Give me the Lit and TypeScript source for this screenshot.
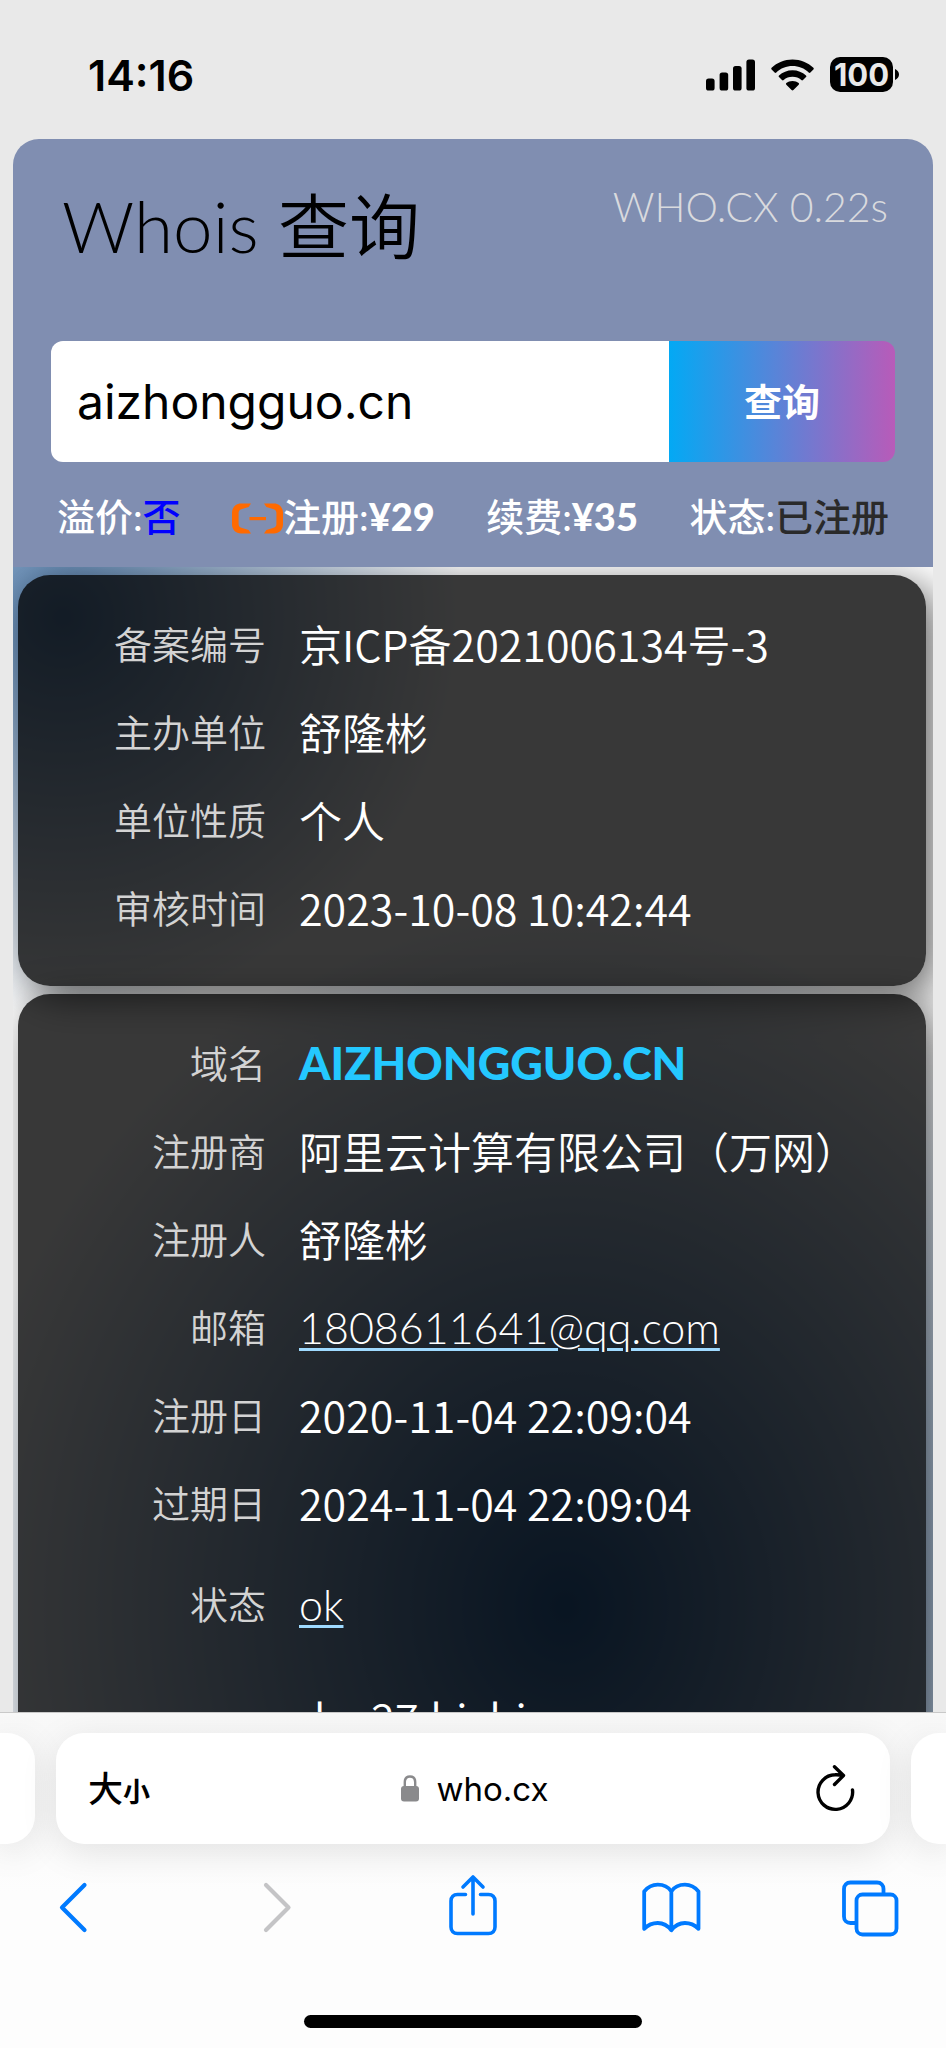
import { LitElement, html, css, svg, nothing } from "lit";
import { customElement, property } from "lit/decorators.js";

interface RecordRow {
  label: string;
  value: string;
  kind?: "domain" | "mail" | "status";
  tall?: boolean;
}

const FILING: RecordRow[] = [
  { label: "备案编号", value: "京ICP备2021006134号-3" },
  { label: "主办单位", value: "舒隆彬" },
  { label: "单位性质", value: "个人" },
  { label: "审核时间", value: "2023-10-08 10:42:44" },
];

const WHOIS: RecordRow[] = [
  { label: "域名", value: "AIZHONGGUO.CN", kind: "domain" },
  { label: "注册商", value: "阿里云计算有限公司（万网）" },
  { label: "注册人", value: "舒隆彬" },
  { label: "邮箱", value: "1808611641@qq.com", kind: "mail" },
  { label: "注册日", value: "2020-11-04 22:09:04" },
  { label: "过期日", value: "2024-11-04 22:09:04" },
  { label: "状态", value: "ok", kind: "status", tall: true },
  { label: "", value: "dns27.hichina.com", tall: true },
];

@customElement("status-bar")
export class StatusBar extends LitElement {
  static styles = css`
    :host {
      display: flex;
      align-items: center;
      justify-content: space-between;
      box-sizing: border-box;
      height: 139px;
      padding: 10px 47px 0 88px;
      font-family: Inter, "Liberation Sans", sans-serif;
      color: #000;
    }
    .time {
      font-size: 43px;
      line-height: 48px;
      font-weight: 600;
    }
    .icons {
      display: flex;
      align-items: center;
      gap: 16px;
    }
    svg {
      display: block;
    }
    .battery {
      display: flex;
      align-items: center;
      gap: 2px;
    }
    .level {
      width: 63px;
      height: 35px;
      border-radius: 10px;
      background: #000;
      color: #e9e9e9;
      font-size: 31px;
      line-height: 35px;
      font-weight: 700;
      text-align: center;
    }
  `;

  render() {
    return html`
      <span class="time">14:16</span>
      <div class="icons">
        <svg width="49" height="32" viewBox="0 0 49 32" aria-hidden="true">
          <rect x="0" y="19.5" width="8.6" height="12" rx="2.6" />
          <rect x="13.6" y="13.5" width="8.6" height="18" rx="2.6" />
          <rect x="27" y="7" width="8.6" height="24.5" rx="2.6" />
          <rect x="40.4" y="0.5" width="8.6" height="31" rx="2.6" />
        </svg>
        <svg width="43" height="32" viewBox="0 0 43 32" aria-hidden="true">
          <path d="M21.5 0.5C29.6 0.5 37 3.6 42.4 8.8C42.9 9.3 42.9 10 42.4 10.5L39.4 13.5C38.9 14 38.2 14 37.7 13.5C33.4 9.4 27.7 7.1 21.5 7.1C15.3 7.1 9.6 9.4 5.3 13.5C4.8 14 4.1 14 3.6 13.5L.6 10.5C.1 10 .1 9.3 .6 8.8C6 3.6 13.4.5 21.5.5Z" />
          <path d="M21.5 11.2C26.7 11.2 31.5 13.2 35 16.4C35.5 16.9 35.5 17.6 35 18.1L32 21C31.5 21.5 30.8 21.5 30.3 21C28 19 24.9 17.8 21.5 17.8C18.1 17.8 15 19 12.7 21C12.2 21.5 11.5 21.5 11 21L8 18.1C7.5 17.6 7.5 16.9 8 16.4C11.5 13.2 16.3 11.2 21.5 11.2Z" />
          <path d="M21.5 21.9C23.9 21.9 26.1 22.7 27.7 24.1C28.2 24.6 28.2 25.2 27.7 25.7L22.4 31.1C21.9 31.6 21.1 31.6 20.6 31.1L15.3 25.7C14.8 25.2 14.8 24.6 15.3 24.1C16.9 22.7 19.1 21.9 21.5 21.9Z" />
        </svg>
        <div class="battery">
          <span class="level">100</span>
          <svg width="4" height="11" viewBox="0 0 4 11" aria-hidden="true">
            <path d="M0 0C2.4 1 4 3 4 5.5S2.4 10 0 11Z" />
          </svg>
        </div>
      </div>
    `;
  }
}

@customElement("search-panel")
export class SearchPanel extends LitElement {
  static styles = css`
    :host {
      display: block;
      padding: 39px 38px 31px;
      border-radius: 26px 26px 0 0;
      background: #808eb1;
      font-family: Lato, "Noto Sans CJK SC", sans-serif;
    }
    .head {
      display: flex;
      justify-content: space-between;
      align-items: flex-start;
      padding: 0 7px 0 11px;
    }
    h1 {
      margin: 0;
      font-size: 71px;
      line-height: 96px;
      font-weight: 350;
      color: #000;
    }
    .timing {
      font-size: 41px;
      line-height: 58px;
      font-weight: 300;
      color: #d9dade;
    }
    .search {
      display: flex;
      height: 121px;
      margin-top: 67px;
      border-radius: 12px;
      overflow: hidden;
    }
    .domain {
      flex: 1;
      min-width: 0;
      box-sizing: border-box;
      border: 0;
      padding: 0 26px;
      background: #fff;
      color: #000;
      font: 400 48px Inter, "Liberation Sans", sans-serif;
      outline: none;
    }
    .go {
      width: 226px;
      border: 0;
      padding: 0 0 4px;
      background: linear-gradient(90deg, #03a9f4, #b85bb9);
      color: #fff;
      font: 700 38px "Noto Sans CJK SC", sans-serif;
    }
    .facts {
      display: flex;
      justify-content: space-between;
      margin: 34px 0 0;
      padding: 0 6px;
      font-size: 38px;
      line-height: 40px;
      font-weight: 900;
      color: #fff;
    }
    .fact {
      display: flex;
      align-items: center;
    }
    dt,
    dd {
      margin: 0;
    }
    dt {
      font-weight: 500;
    }
    .no {
      color: #00f;
      font-weight: 500;
    }
    .taken {
      color: #2a2a2a;
      font-weight: 500;
    }
    .brand {
      display: block;
      padding-top: 4px;
    }
  `;

  render() {
    return html`
      <div class="head">
        <h1>Whois 查询</h1>
        <span class="timing">WHO.CX 0.22s</span>
      </div>
      <form class="search" @submit=${(e: Event) => e.preventDefault()}>
        <input class="domain" type="text" aria-label="域名" .value=${"aizhongguo.cn"} />
        <button class="go" type="submit">查询</button>
      </form>
      <dl class="facts">
        <div class="fact"><dt>溢价:</dt><dd class="no">否</dd></div>
        <div class="fact">
          <svg class="brand" width="51" height="31" viewBox="0 0 51 31" aria-hidden="true">
            <path fill="#ff6a00" d="M19 .5H9C4 .5 0 4.500 0 9.500V21.500C0 26.500 4 30.500 9 30.500H19L16.600 27 9.300 24.800C7.700 24.300 6.600 22.900 6.600 21.200V9.800C6.600 8.100 7.700 6.700 9.300 6.200L16.600 4Z" />
            <path fill="#ff6a00" d="M32 .5H42C47 .5 51 4.500 51 9.500V21.500C51 26.500 47 30.500 42 30.500H32L34.400 27 41.700 24.800C43.300 24.300 44.400 22.900 44.400 21.200V9.800C44.400 8.100 43.300 6.700 41.700 6.200L34.400 4Z" />
            <rect fill="#ff6a00" x="17.500" y="14" width="16.500" height="3.200" />
          </svg>
          <dt>注册:</dt><dd>¥29</dd>
        </div>
        <div class="fact"><dt>续费:</dt><dd>¥35</dd></div>
        <div class="fact"><dt>状态:</dt><dd class="taken">已注册</dd></div>
      </dl>
    `;
  }
}

@customElement("record-card")
export class RecordCard extends LitElement {
  @property({ attribute: false }) rows: RecordRow[] = [];

  static styles = css`
    :host {
      display: block;
      padding: 27px 0 32px;
      border-radius: 32px;
      background: rgba(0, 0, 0, 0.78);
      box-shadow: 10px 10px 40px rgba(0, 0, 0, 0.6);
      font-family: "Noto Sans CJK SC", sans-serif;
      font-weight: 350;
    }
    table {
      width: 100%;
      table-layout: fixed;
      border-collapse: collapse;
    }
    tr {
      height: 88px;
    }
    .tall {
      height: 114px;
    }
    th {
      width: 248px;
      padding: 0 0 6px;
      text-align: right;
      font-size: 38px;
      line-height: 56px;
      font-weight: 350;
      color: #d3d3d3;
    }
    td {
      padding: 0 0 6px 33px;
      font-size: 43px;
      line-height: 56px;
      color: #fff;
      white-space: nowrap;
    }
    .domain {
      font-family: Lato, sans-serif;
      font-size: 45px;
      font-weight: 900;
      color: #24c8ff;
    }
    a {
      font-family: Lato, sans-serif;
      color: #fff;
      text-decoration: underline #9fdaff 3px;
      text-underline-offset: 4px;
    }
  `;

  private cell(row: RecordRow) {
    if (row.kind === "domain") return html`<span class="domain">${row.value}</span>`;
    if (row.kind === "mail") return html`<a href="mailto:${row.value}">${row.value}</a>`;
    if (row.kind === "status") return html`<a href="#status">${row.value}</a>`;
    return row.value;
  }

  render() {
    return html`
      <table>
        <tbody>
          ${this.rows.map(
            (row) => html`<tr class=${row.tall ? "tall" : nothing}>
              <th scope="row">${row.label}</th>
              <td>${this.cell(row)}</td>
            </tr>`
          )}
        </tbody>
      </table>
    `;
  }
}

const icons = {
  back: svg`<path d="M43.500 12L21 34.500L43.500 57" stroke-width="4.200" />`,
  forward: svg`<path d="M26 12L48.500 34.500L26 57" stroke="#c4c4c6" stroke-width="4.200" />`,
  share: svg`<path stroke-width="3.600" d="M25.500 21.500H17.500C13.500 21.500 11 24 11 28V54C11 58 13.500 60.500 17.500 60.500H48.500C52.500 60.500 55 58 55 54V28C55 24 52.500 21.500 48.500 21.500H40.500M33 41V5M23 14L33 4L43 14" />`,
  book: svg`<path stroke-width="3.900" d="M32 57.500C27.500 51.500 22 50 18 50C13 50 8.500 51.500 4 56V17.500C8 12.500 13 10.500 18 10.500C24 10.500 29 13 32 17.500C35 13 40 10.500 46 10.500C51 10.500 56 12.500 60 17.500V56C55.500 51.500 51 50 46 50C42 50 36.500 51.500 32 57.500ZM32 17.500V57" transform="translate(1.300 1.500) scale(.97)" />`,
  tabs: svg`<path stroke-width="3.800" d="M18 50H12.500C8.500 50 6 47.500 6 43.500V16C6 12 8.500 9.500 12.500 9.500H39C43 9.500 45.500 12 45.500 16V21" /><rect stroke-width="3.800" x="18.500" y="21.500" width="40" height="40" rx="6" />`,
};

@customElement("browser-bar")
export class BrowserBar extends LitElement {
  static styles = css`
    :host {
      display: block;
      position: relative;
      border-top: 1px solid #c9c9c9;
      background: linear-gradient(#f8f8f8, #fafafa 100px, #fdfdfd 180px);
      font-family: Inter, "Noto Sans CJK SC", sans-serif;
      overflow: hidden;
    }
    button {
      border: 0;
      padding: 0;
      background: none;
      font: inherit;
      color: inherit;
    }
    svg {
      display: block;
    }
    .tabs {
      display: flex;
      gap: 21px;
      padding-top: 20px;
    }
    .pill {
      height: 111px;
      box-sizing: border-box;
      border-radius: 28px;
      background: #fff;
      box-shadow: 0 8px 36px rgba(0, 0, 0, 0.1);
    }
    .previous {
      width: 35px;
      border-radius: 0 28px 28px 0;
    }
    .next {
      width: 35px;
      border-radius: 28px 0 0 28px;
    }
    .current {
      flex: 1;
      display: grid;
      grid-template-columns: 1fr auto 1fr;
      align-items: center;
      padding: 0 32px;
    }
    .size {
      justify-self: start;
      font-family: "Noto Sans CJK SC", sans-serif;
      font-weight: 500;
      line-height: 40px;
      font-size: 35px;
    }
    .small {
      font-size: 27px;
      font-weight: 700;
    }
    .site {
      display: flex;
      align-items: center;
      gap: 18px;
      padding-left: 3px;
      font-size: 33px;
      line-height: 44px;
    }
    .reload {
      justify-self: end;
    }
    .tools {
      display: flex;
      justify-content: space-between;
      padding: 29px 44px 0 41px;
      color: #007aff;
    }
    .home {
      width: 338px;
      height: 13px;
      margin: 78px auto 20px;
      border-radius: 7px;
      background: #000;
    }
  `;

  private tool(label: string, shape: unknown) {
    return html`<button aria-label=${label}>
      <svg width="64" height="64" viewBox="0 0 64 64" fill="none" stroke="currentColor" stroke-linecap="round" stroke-linejoin="round">${shape}</svg>
    </button>`;
  }

  render() {
    return html`
      <div class="tabs">
        <div class="pill previous"></div>
        <div class="pill current">
          <button class="size">大<span class="small">小</span></button>
          <div class="site">
            <svg width="18" height="27" viewBox="0 0 18 27" aria-hidden="true">
              <rect x="0" y="11" width="18" height="15.500" rx="3" fill="#8a8a8c" />
              <path d="M3.800 12V7C3.800 3.500 6 1.500 9 1.500S14.200 3.500 14.200 7V12" fill="none" stroke="#8a8a8c" stroke-width="2.400" />
            </svg>
            <span>who.cx</span>
          </div>
          <button class="reload" aria-label="刷新">
            <svg width="46" height="48" viewBox="0 0 46 48" fill="none" stroke="#000" stroke-width="3.400" stroke-linecap="round" stroke-linejoin="round">
              <path d="M40.500 25A17.300 17.300 0 1 1 23 9.800Q27 9.500 31 10.800M22.500 1.800L31.500 10.500L22.500 19.500" />
            </svg>
          </button>
        </div>
        <div class="pill next"></div>
      </div>
      <nav class="tools">
        ${this.tool("后退", icons.back)} ${this.tool("前进", icons.forward)}
        ${this.tool("分享", icons.share)} ${this.tool("书签", icons.book)}
        ${this.tool("标签页", icons.tabs)}
      </nav>
      <div class="home"></div>
    `;
  }
}

@customElement("app-root")
export class AppRoot extends LitElement {
  static styles = css`
    :host {
      display: flex;
      flex-direction: column;
      height: 100vh;
      overflow: hidden;
      background: #e9e9e9;
    }
    .page {
      flex: 1;
      min-height: 0;
      overflow: hidden;
      padding: 0 13px;
    }
    .results {
      display: flex;
      flex-direction: column;
      gap: 8px;
      padding: 8px 7px 8px 5px;
      overflow: hidden;
      background:
        radial-gradient(circle at 50px 50px, #567fac, rgba(255, 255, 255, 0) 400px),
        radial-gradient(ellipse 620px 700px at 60% 1040px, #295f9b, #fff);
    }
  `;

  render() {
    return html`
      <status-bar></status-bar>
      <main class="page">
        <search-panel></search-panel>
        <section class="results">
          <record-card .rows=${FILING}></record-card>
          <record-card .rows=${WHOIS}></record-card>
        </section>
      </main>
      <browser-bar></browser-bar>
    `;
  }
}
